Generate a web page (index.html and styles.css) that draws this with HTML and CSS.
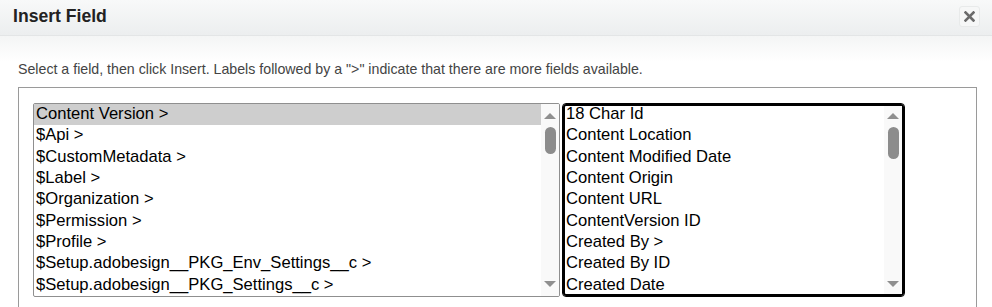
FILE: index.html
```html
<!DOCTYPE html>
<html lang="en">

<head>
    <meta charset="UTF-8">
    <title>Insert Field</title>
    <link rel="stylesheet" href="styles.css">
</head>

<body>

    <div class="dialog-header">
        <h2>Insert Field</h2>
        <button class="close-btn" title="Close">
            <svg width="11" height="11" viewBox="0 0 11 11"><path d="M1.5 1.5 L9.5 9.5 M9.5 1.5 L1.5 9.5" stroke="#6b6b6b" stroke-width="2.6" stroke-linecap="square"/></svg>
        </button>
    </div>

    <div class="dialog-body">
        <p class="hint">Select a field, then click Insert. Labels followed by a "&gt;" indicate that there are more fields available.</p>

        <div class="field-box">
            <div class="list-box first">
                <ul class="list-items">
                    <li class="selected">Content Version &gt;</li>
                    <li>$Api &gt;</li>
                    <li>$CustomMetadata &gt;</li>
                    <li>$Label &gt;</li>
                    <li>$Organization &gt;</li>
                    <li>$Permission &gt;</li>
                    <li>$Profile &gt;</li>
                    <li>$Setup.adobesign__PKG_Env_Settings__c &gt;</li>
                    <li>$Setup.adobesign__PKG_Settings__c &gt;</li>
                </ul>
                <div class="scroll-track">
                    <span class="arrow up"></span>
                    <span class="thumb"></span>
                    <span class="arrow down"></span>
                </div>
            </div>
            <div class="list-box second">
                <ul class="list-items">
                    <li>18 Char Id</li>
                    <li>Content Location</li>
                    <li>Content Modified Date</li>
                    <li>Content Origin</li>
                    <li>Content URL</li>
                    <li>ContentVersion ID</li>
                    <li>Created By &gt;</li>
                    <li>Created By ID</li>
                    <li>Created Date</li>
                </ul>
                <div class="scroll-track">
                    <span class="arrow up"></span>
                    <span class="thumb"></span>
                    <span class="arrow down"></span>
                </div>
            </div>
        </div>
    </div>

</body>
</html>
```

FILE: styles.css
```css
body {
    font-family: "Liberation Sans", Arial, sans-serif;
    background-color: white;
    margin: 0;
    padding: 0;
    overflow: hidden;
}

.dialog-header {
    height: 35px;
    background: linear-gradient(#f8f9f9, #eceeef);
    border-bottom: 1px solid #e3e5e6;
    display: flex;
    align-items: center;
    justify-content: space-between;
    padding: 0 12px 0 13px;
}

.dialog-header h2 {
    margin: 0;
    font-size: 17.6px;
    color: #222;
    padding-bottom: 2px;
}

.close-btn {
    width: 21px;
    height: 21px;
    padding: 0;
    margin-bottom: 3px;
    border: 1px solid #e8eaea;
    border-radius: 3px;
    background: #f6f7f7;
    display: flex;
    align-items: center;
    justify-content: center;
}

.dialog-body {
    background: linear-gradient(#f4f5f5, white 26px);
    padding: 25px 15px 0 18px;
}

.hint {
    margin: 0 0 10px;
    font-size: 14.2px;
    line-height: 16px;
    color: #444;
}

.field-box {
    border: 1px solid #9a9a9a;
    border-bottom: none;
    padding: 15px 14px 20px;
    display: flex;
    gap: 2px;
}

.list-box {
    height: 194px;
    box-sizing: border-box;
    display: flex;
    overflow: hidden;
    background: white;
}

.list-box.first {
    width: 527px;
    border: 1px solid #8f8f8f;
    border-radius: 2px;
}

.list-box.second {
    width: 343px;
    border: 1px solid #000;
    border-radius: 4px;
    box-shadow: inset 0 0 0 2px #000;
}

.list-items {
    flex: 1;
    list-style: none;
    margin: 0;
    padding: 0;
    font-size: 16.6px;
    line-height: 21.33px;
    color: black;
    white-space: nowrap;
    overflow: hidden;
}

.list-items li {
    padding-bottom: 1px;
    line-height: 20.33px;
}

.first .list-items li {
    padding-left: 2px;
    padding-right: 2px;
}

.second .list-items {
    padding-left: 3px;
}

.list-items li.selected {
    background: #cecece;
}

.scroll-track {
    width: 18px;
    background: #f9f9f9;
    display: flex;
    flex-direction: column;
    align-items: center;
    padding: 9px 0;
    box-sizing: border-box;
}

.second .scroll-track {
    margin: 2px 2px 2px 0;
    padding: 7px 0;
}

.arrow {
    width: 0;
    height: 0;
    border-left: 6.5px solid transparent;
    border-right: 6.5px solid transparent;
}

.arrow.up {
    border-bottom: 6px solid #8f8f8f;
}

.arrow.down {
    border-top: 6px solid #8f8f8f;
    margin-top: auto;
}

.thumb {
    width: 11px;
    height: 27px;
    margin-top: 8px;
    border-radius: 6px;
    background: #8c8c8c;
}

.second .thumb {
    height: 32px;
}
```
